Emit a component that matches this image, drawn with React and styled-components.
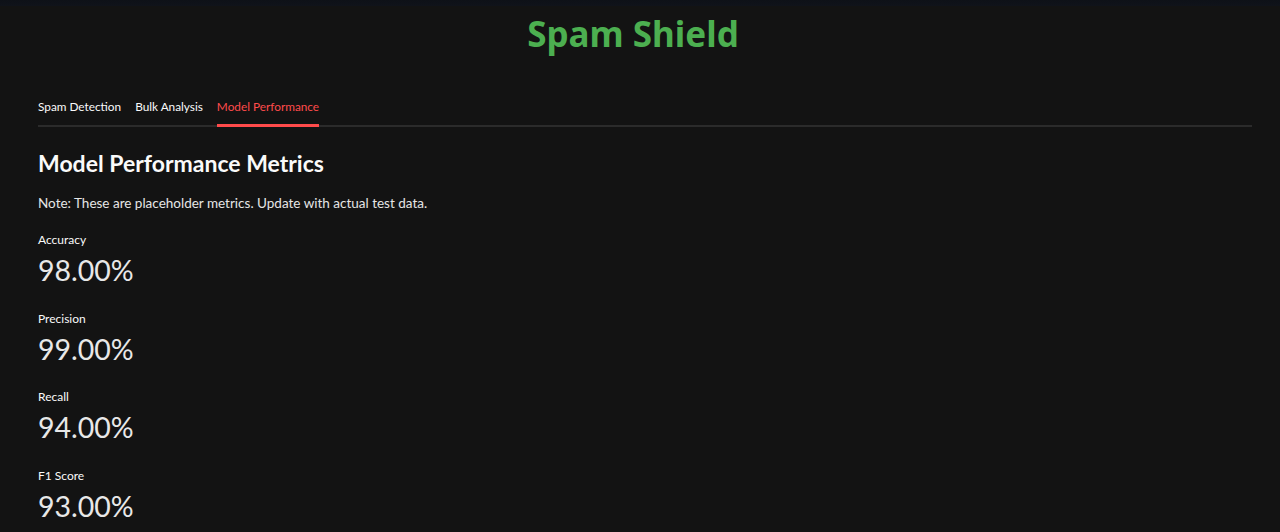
import styled, { createGlobalStyle } from "styled-components"

const GlobalStyle = createGlobalStyle`
  html, body {
    margin: 0;
    padding: 0;
    background: #131313;
    font-family: "Lato", "Noto Sans", sans-serif;
    color: #fafafa;
  }
`

const metrics = [
  { label: "Accuracy", value: "98.00%" },
  { label: "Precision", value: "99.00%" },
  { label: "Recall", value: "94.00%" },
  { label: "F1 Score", value: "93.00%" },
]

const tabs = ["Spam Detection", "Bulk Analysis", "Model Performance"]

export default function App() {
  return (
    <Page>
      <GlobalStyle />
      <TopBar />
      <Main>
        <Title>Spam Shield</Title>
        <TabList>
          {tabs.map((t) => (
            <Tab key={t} $active={t === "Model Performance"}>{t}</Tab>
          ))}
        </TabList>
        <Heading>Model Performance Metrics</Heading>
        <Note>Note: These are placeholder metrics. Update with actual test data.</Note>
        {metrics.map((m) => (
          <Metric key={m.label}>
            <MetricLabel>{m.label}</MetricLabel>
            <MetricValue>{m.value}</MetricValue>
          </Metric>
        ))}
      </Main>
    </Page>
  )
}

const Page = styled.div`
  min-height: 532px;
  background: #131313;
`

const TopBar = styled.div`
  height: 6px;
  background: linear-gradient(180deg, #0e1117, #10131a);
`

const Main = styled.div`
  padding: 0 28px 0 38px;
`

const Title = styled.h1`
  margin: 0;
  padding: 6px 24px 0 0;
  height: 52px;
  text-align: center;
  font-family: "Noto Sans", "Lato", sans-serif;
  font-size: 35px;
  font-weight: 700;
  color: #4caf50;
  line-height: 44px;
`

const TabList = styled.div`
  display: flex;
  gap: 14px;
  margin-top: 33px;
  border-bottom: 2px solid #2b2b2b;
`

const Tab = styled.div`
  font-size: 11.8px;
  line-height: 16px;
  padding: 2px 0 9px;
  margin-bottom: -2px;
  color: ${(p) => (p.$active ? "#ff4b4b" : "#fafafa")};
  border-bottom: 3px solid ${(p) => (p.$active ? "#ff4b4b" : "transparent")};
`

const Heading = styled.h2`
  margin: 21px 0 0;
  font-size: 23px;
  font-weight: 700;
  line-height: 30px;
`

const Note = styled.p`
  margin: 16px 0 20px;
  font-size: 13.5px;
  line-height: 18px;
  color: #e6e6e6;
`

const Metric = styled.div`
  margin-top: 13px;
  height: 65.5px;

  &:first-of-type {
    margin-top: 0;
  }
`

const MetricLabel = styled.div`
  font-size: 12px;
  line-height: 16px;
`

const MetricValue = styled.div`
  margin-top: 4px;
  font-size: 28.5px;
  font-weight: 400;
  line-height: 36px;
  color: #e8e8e8;
`
